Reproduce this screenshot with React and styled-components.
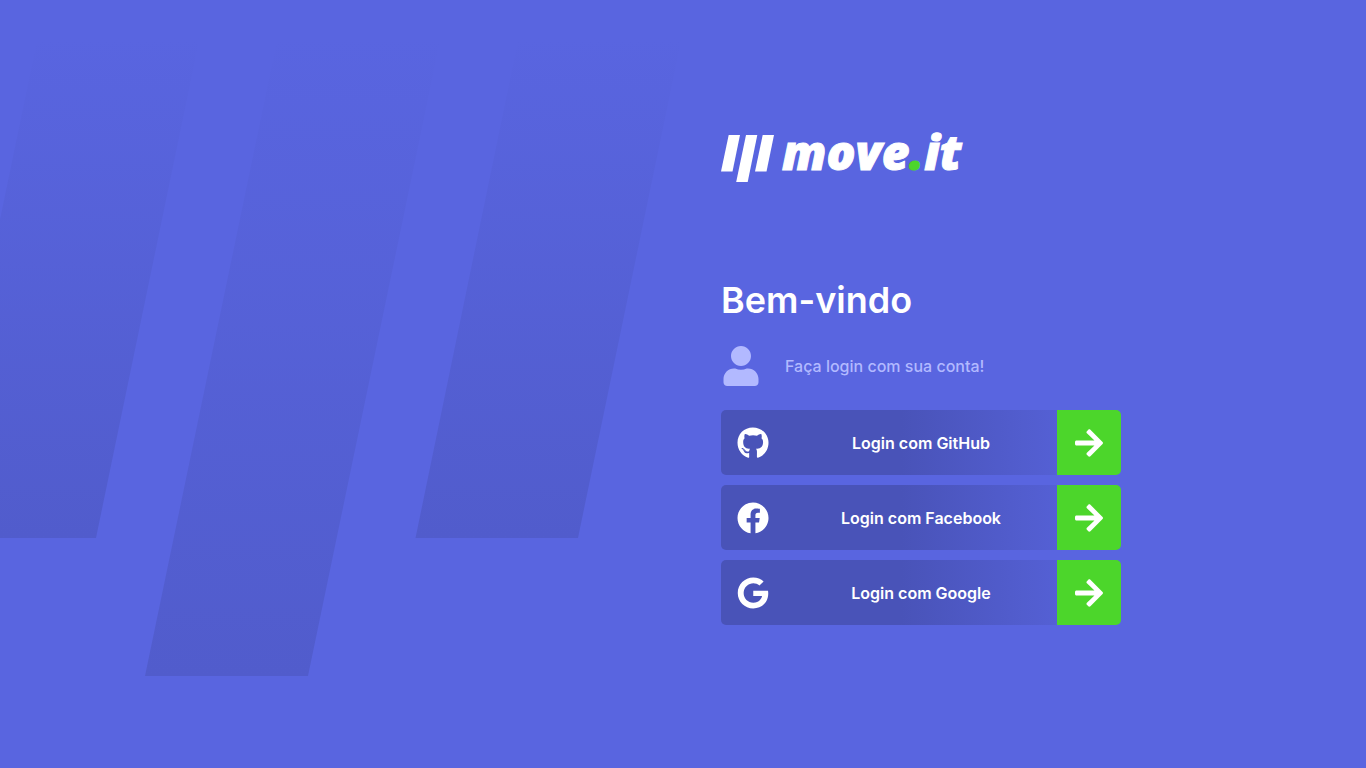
import React from "react";
import styled, { createGlobalStyle } from "styled-components";
import { FaArrowRight, FaFacebook, FaGithub, FaGoogle } from "react-icons/fa";

const GlobalStyle = createGlobalStyle`
  *, *::before, *::after { box-sizing: border-box; }
  body {
    margin: 0;
    background: #5965e0;
    color: #fff;
    font-family: Inter, sans-serif;
  }
`;

const Page = styled.main`
  display: grid;
  grid-template-columns: 1fr 1fr;
  min-height: 100vh;
`;

const Artwork = styled.div`
  display: flex;
  align-items: center;
  overflow: hidden;

  svg {
    flex: none;
    height: 100vh;
  }
`;

const Panel = styled.section`
  display: flex;
  flex-direction: column;
  justify-content: center;
  padding: 0 40px 13px 38px;
`;

const Content = styled.div`
  width: 100%;
  max-width: 400px;
`;

const Logo = styled.div`
  display: flex;
  align-items: flex-start;
  gap: 8px;
  height: 56px;
  margin-bottom: 92px;

  svg {
    margin-top: 4px;
  }
`;

const LogoName = styled.span`
  font: italic 800 48px/44px "Open Sans", sans-serif;
  -webkit-text-stroke: 1px currentColor;
`;

const LogoDot = styled.span`
  color: #4cd62b;
`;

const Title = styled.h1`
  margin: 0 0 24px;
  font-size: 36px;
  font-weight: 600;
  line-height: 44px;
`;

const Hint = styled.div`
  display: flex;
  align-items: center;
  gap: 24px;
  margin-bottom: 24px;
  color: #b2b9ff;

  p {
    margin: 0;
    font-size: 16px;
    font-weight: 500;
    line-height: 24px;
  }
`;

const Providers = styled.div`
  display: grid;
  gap: 10px;
`;

const ProviderButton = styled.button`
  display: grid;
  grid-template-columns: 64px 1fr 64px;
  align-items: center;
  width: 100%;
  height: 65px;
  padding: 0;
  border: 0;
  border-radius: 5px;
  overflow: hidden;
  background: linear-gradient(90deg, #4953b8 45%, #5965e0 100%);
  color: #fff;
  font: 600 16px/24px Inter, sans-serif;
  cursor: pointer;

  > svg {
    justify-self: center;
  }
`;

const Arrow = styled.span`
  display: flex;
  align-items: center;
  justify-content: center;
  height: 100%;
  background: #4cd62b;
`;

const providers = [
  { name: "GitHub", Icon: FaGithub },
  { name: "Facebook", Icon: FaFacebook },
  { name: "Google", Icon: FaGoogle },
];

function BackgroundBars() {
  return (
    <svg viewBox="0 0 683 768" aria-hidden="true">
      <defs>
        <linearGradient id="short" gradientUnits="userSpaceOnUse" x1="0" y1="36" x2="0" y2="538">
          <stop offset="0" stopColor="#4953b8" stopOpacity="0" />
          <stop offset="1" stopColor="#4953b8" stopOpacity="0.5" />
        </linearGradient>
        <linearGradient id="long" gradientUnits="userSpaceOnUse" x1="0" y1="36" x2="0" y2="676">
          <stop offset="0" stopColor="#4953b8" stopOpacity="0" />
          <stop offset="1" stopColor="#4953b8" stopOpacity="0.5" />
        </linearGradient>
      </defs>
      <path d="M38 36H200L96 538H-66Z" fill="url(#short)" />
      <path d="M278 36H441L308 676H145Z" fill="url(#long)" />
      <path d="M519 36H682L578 538H415.500Z" fill="url(#short)" />
    </svg>
  );
}

function LogoMark() {
  return (
    <svg width="53" height="48" viewBox="0 0 53 48" fill="#fff" aria-hidden="true">
      <path d="M7.700 1H19L11.500 37.500H0Z" />
      <path d="M25 1H36.300L26.700 48H15.200Z" />
      <path d="M41.700 1H53L45.500 37.500H34Z" />
    </svg>
  );
}

function UserIcon() {
  return (
    <svg width="40" height="40" viewBox="-32 0 512 512" fill="currentColor" aria-hidden="true">
      <path d="M224 256c70.700 0 128-57.300 128-128S294.700 0 224 0 96 57.300 96 128s57.300 128 128 128zm89.600 32h-16.700c-22.200 10.200-46.900 16-72.900 16s-50.600-5.800-72.900-16h-16.700C60.200 288 0 348.200 0 422.400V464c0 26.500 21.500 48 48 48h352c26.500 0 48-21.500 48-48v-41.600c0-74.200-60.200-134.400-134.400-134.400z" />
    </svg>
  );
}

export default function App() {
  return (
    <>
      <GlobalStyle />
      <Page>
        <Artwork>
          <BackgroundBars />
        </Artwork>
        <Panel>
          <Content>
            <Logo>
              <LogoMark />
              <LogoName>
                move<LogoDot>.</LogoDot>it
              </LogoName>
            </Logo>
            <Title>Bem-vindo</Title>
            <Hint>
              <UserIcon />
              <p>Faça login com sua conta!</p>
            </Hint>
            <Providers>
              {providers.map(({ name, Icon }) => (
                <ProviderButton key={name} type="button">
                  <Icon size={32} aria-hidden="true" />
                  <span>Login com {name}</span>
                  <Arrow>
                    <FaArrowRight size={32} aria-hidden="true" />
                  </Arrow>
                </ProviderButton>
              ))}
            </Providers>
          </Content>
        </Panel>
      </Page>
    </>
  );
}
